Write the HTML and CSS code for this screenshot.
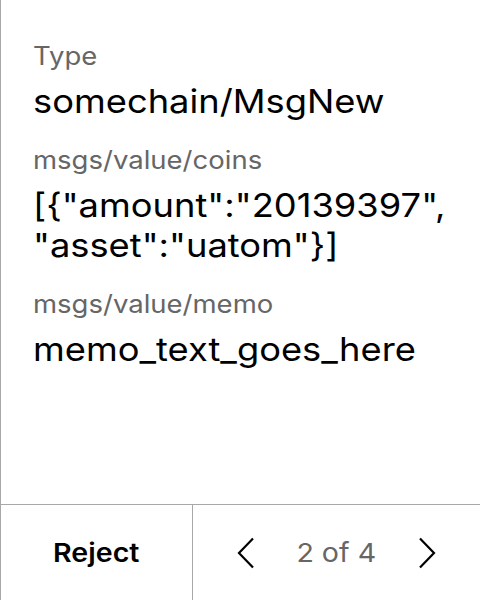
FILE: index.html
```html
<!DOCTYPE html>
<html>
<head>
<meta charset="utf-8">
<link rel="stylesheet" href="styles.css">
</head>
<body>
<div class="screen">
  <div class="content">
    <div class="field">
      <div class="label">Type</div>
      <div class="value">somechain/MsgNew</div>
    </div>
    <div class="field">
      <div class="label">msgs/value/coins</div>
      <div class="value">[{"amount":"20139397",<br>"asset":"uatom"}]</div>
    </div>
    <div class="field">
      <div class="label">msgs/value/memo</div>
      <div class="value">memo_text_goes_here</div>
    </div>
  </div>
  <div class="footer">
    <div class="reject"><span class="wide">Reject</span></div>
    <div class="pager">
      <svg class="chev" width="18" height="32" viewBox="0 0 18 32"><polyline points="16,1.5 2,16 16,30.5" fill="none" stroke="#000" stroke-width="2.2"/></svg>
      <span class="count wide">2 of 4</span>
      <svg class="chev" width="18" height="32" viewBox="0 0 18 32"><polyline points="2,1.5 16,16 2,30.5" fill="none" stroke="#000" stroke-width="2.2"/></svg>
    </div>
  </div>
</div>
</body>
</html>
```
FILE: styles.css
```css
html, body {
  margin: 0;
  padding: 0;
  background: #fff;
}
body {
  font-family: Inter, "Noto Sans", sans-serif;
  color: #000;
}
.screen {
  width: 480px;
  height: 600px;
  box-sizing: border-box;
  border-left: 1px solid #a8a8a8;
  display: flex;
  flex-direction: column;
  overflow: hidden;
}
.content {
  height: 504px;
  box-sizing: border-box;
  padding: 40px 10px 0 32px;
  display: flex;
  flex-direction: column;
  gap: 23px;
}
.field {
  display: flex;
  flex-direction: column;
  gap: 9px;
}
.label {
  font-size: 25px;
  line-height: 32px;
  color: #666;
  transform: scaleX(1.1);
  transform-origin: 0 50%;
}
.value {
  font-size: 33px;
  line-height: 40px;
  color: #000;
  white-space: nowrap;
  transform: scaleX(1.1);
  transform-origin: 0 50%;
}
.footer {
  flex: 1;
  display: flex;
  border-top: 1px solid #a8a8a8;
}
.reject {
  width: 191px;
  flex: none;
  display: flex;
  align-items: center;
  justify-content: center;
  font-size: 26px;
  font-weight: 600;
  border-right: 1px solid #a8a8a8;
}
.wide {
  display: inline-block;
  transform: scaleX(1.1);
}
.pager {
  flex: 1;
  display: flex;
  align-items: center;
  justify-content: center;
  gap: 45px;
}
.count {
  font-size: 26px;
  color: #666;
}
.chev {
  display: block;
}
```
